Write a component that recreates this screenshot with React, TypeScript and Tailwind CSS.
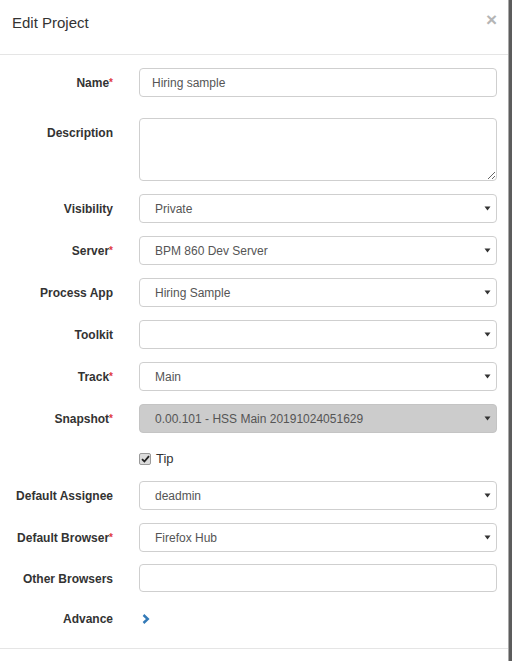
import type { ReactNode } from 'react';

function Caret() {
  return (
    <svg width="7" height="5" viewBox="0 0 7 5" className="shrink-0 mr-[1px]">
      <path d="M0.5 0.5 L6.5 0.5 L3.5 4.5 Z" fill="#333" />
    </svg>
  );
}

function Row({
  label,
  required,
  children,
  className = '',
}: {
  label: string;
  required?: boolean;
  children: ReactNode;
  className?: string;
}) {
  return (
    <div className={`flex items-start ${className}`}>
      <div className="w-[113px] h-[29px] flex items-center justify-end text-[12px] font-bold text-[#333] whitespace-nowrap">
        {label}
        {required && <span className="text-[#e0383e] text-[10px] self-start mt-[7px]">*</span>}
      </div>
      <div className="ml-[26px] w-[358px]">{children}</div>
    </div>
  );
}

function TextBox({ value = '', short }: { value?: string; short?: boolean }) {
  return (
    <div
      className={`${short ? 'h-[28px]' : 'h-[29px]'} border border-[#cfcfcf] rounded-[4px] bg-white flex items-center pl-[12px] text-[12px] text-[#555]`}
    >
      {value}
    </div>
  );
}

function Select({ value = '', disabled }: { value?: string; disabled?: boolean }) {
  return (
    <div
      className={`h-[29px] border rounded-[4px] flex items-center justify-between pl-[15px] pr-[4px] text-[12px] text-[#555] ${
        disabled ? 'bg-[#cccccc] border-[#c4c4c4]' : 'bg-white border-[#cfcfcf]'
      }`}
    >
      <span>{value}</span>
      <Caret />
    </div>
  );
}

export default function App() {
  return (
    <div className="flex h-[661px] bg-white" style={{ fontFamily: '"Liberation Sans", Arial, sans-serif' }}>
      <div className="w-[509px] border-r border-[#a9a9a9] flex flex-col">
        {/* Header */}
        <div className="h-[55px] border-b border-[#e5e5e5] flex items-start justify-between pl-[12px] pr-[11px] pt-[13px]">
          <h4 className="text-[15px] leading-[20px] text-[#333]">Edit Project</h4>
          <span className="text-[19px] leading-[14px] font-bold text-[#b5b5b5]">×</span>
        </div>

        {/* Body */}
        <div className="pt-[13px] flex flex-col">
          <Row label="Name" required>
            <TextBox value="Hiring sample" />
          </Row>
          <Row label="Description" className="mt-[21px]">
            <textarea className="block w-full h-[63px] border border-[#cfcfcf] rounded-[4px] bg-white outline-none" />
          </Row>
          <Row label="Visibility" className="mt-[13px]">
            <Select value="Private" />
          </Row>
          <Row label="Server" required className="mt-[13px]">
            <Select value="BPM 860 Dev Server" />
          </Row>
          <Row label="Process App" className="mt-[13px]">
            <Select value="Hiring Sample" />
          </Row>
          <Row label="Toolkit" className="mt-[13px]">
            <Select />
          </Row>
          <Row label="Track" required className="mt-[13px]">
            <Select value="Main" />
          </Row>
          <Row label="Snapshot" required className="mt-[13px]">
            <Select value="0.00.101 - HSS Main 20191024051629" disabled />
          </Row>

          {/* Tip checkbox */}
          <div className="flex items-center ml-[139px] mt-[19px] h-[14px]">
            <span className="w-[12px] h-[12px] rounded-[2px] border border-[#9a9a9a] bg-[#dcdcdc] flex items-center justify-center">
              <svg width="9" height="8" viewBox="0 0 9 8">
                <path d="M1 4.2 L3.4 6.5 L8 1.2" stroke="#222" strokeWidth="1.8" fill="none" />
              </svg>
            </span>
            <span className="ml-[5px] text-[13px] text-[#333]">Tip</span>
          </div>

          <Row label="Default Assignee" className="mt-[15px]">
            <Select value="deadmin" />
          </Row>
          <Row label="Default Browser" required className="mt-[13px]">
            <Select value="Firefox Hub" />
          </Row>
          <Row label="Other Browsers" className="mt-[12px]">
            <TextBox short />
          </Row>
          <Row label="Advance" className="mt-[11px]">
            <div className="h-[29px] flex items-center pl-[3px]">
              <svg width="8" height="10" viewBox="0 0 8 10">
                <path d="M1.5 1 L5.8 5 L1.5 9" stroke="#337ab7" strokeWidth="2.4" fill="none" />
              </svg>
            </div>
          </Row>
        </div>

        {/* Footer line */}
        <div className="mt-[15px] border-t border-[#e5e5e5]" />
      </div>
      <div className="flex-1 bg-[#5c5c5c]" />
    </div>
  );
}
